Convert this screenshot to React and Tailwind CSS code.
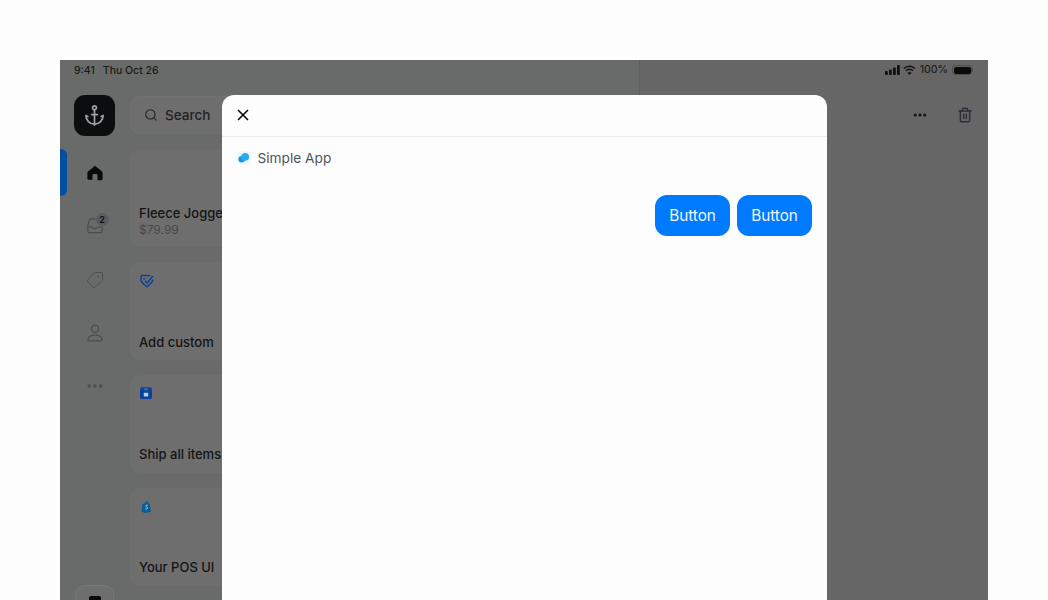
import React from "react";
import { Anchor, Search, X, Tag, Ellipsis, Trash2 } from "lucide-react";

function Card({ icon, title, sub, titleClass }) {
  return (
    <div className="h-[98px] w-[220px] shrink-0 rounded-[12px] bg-[#6e6e6e] pl-[10px] pr-0 flex flex-col overflow-hidden whitespace-nowrap">
      <div className="h-[34px] pt-[11px] flex">{icon}</div>
      <div className="flex-1" />
      <div className={`text-[13px] leading-[16px] font-medium text-[#141414] ${titleClass}`}>{title}</div>
      {sub && <div className="text-[12px] leading-[14px] text-[#45474a] pb-[10px]">{sub}</div>}
    </div>
  );
}

const Discount = () => (
  <svg width="16" height="16" viewBox="0 0 16 16" fill="none" stroke="#07439a" strokeWidth="1.5" strokeLinecap="round" strokeLinejoin="round">
    <path d="M10.5 2.6H3.2c-.7 0-1.2.5-1.2 1.2v3.4c0 1 .5 1.7 1.2 2.4l4 3.7c.5.5 1 .5 1.5 0l3.7-3.6c.7-.7 1.3-1.5 1.3-2.6" />
    <path d="M6.5 8.4 8.3 10 13.4 3.5" />
    <circle cx="5" cy="5.8" r=".6" fill="#07439a" strokeWidth="0.6" />
  </svg>
);

const Store = () => (
  <svg width="14" height="14" viewBox="0 0 14 14" fill="none">
    <path d="M3 1.200h8c.9 0 1.600.6 1.700 1.500l.3 2.300v6.500c0 .8-.7 1.500-1.500 1.500h-9C1.700 13 1 12.300 1 11.500V5l.3-2.300c.1-.9.800-1.500 1.700-1.500z" fill="#07439a" />
    <path d="M5.300 2.200h3.400l.3 2.200H5z" fill="#3a68ac" />
    <rect x="4.800" y="6.800" width="4.400" height="3.600" rx="0.500" fill="#c4ccd8" />
  </svg>
);

const Bag = () => (
  <svg width="11" height="13" viewBox="0 0 12 14" className="ml-[2px] mt-[1px]">
    <path d="M1.600 4.200 4 3.400C4.300 1.800 5.200.8 6.200.8c1 0 1.800 1 2 2.600l1.300.5 1.300 8.800L4.700 14 .6 12.800z" fill="#075d97" />
    <path d="M4.800 3.200c.2-1 .7-1.700 1.300-1.700s1 .7 1.200 1.700" stroke="#6e6e6e" strokeWidth="0.6" fill="none" />
    <path d="M7.500 5.800c-.8-.5-2.300-.3-2.300.7 0 1.100 2 1 2 2.200 0 1.100-1.500 1.300-2.500.7" stroke="#b9cfe0" strokeWidth="1" fill="none" />
  </svg>
);

export default function App() {
  return (
    <div className="h-[600px] w-[1048px] overflow-hidden bg-[#fdfdfd] pt-[60px] px-[60px] font-['Inter',sans-serif]">
      <div className="relative h-[540px] w-[928px] overflow-hidden bg-[#666666] flex">
        {/* Left pane */}
        <div className="w-[580px] shrink-0 h-full bg-[#696b6a] border-r border-[#5e5e5e] flex flex-col">
          <div className="h-[35px] shrink-0 pl-[14px] pt-[4px] text-[10.5px] leading-[13px] font-medium text-[#1a1a1a] flex gap-[8px]">
            <span>9:41</span>
            <span>Thu Oct 26</span>
          </div>
          <div className="flex flex-1 min-h-0">
            {/* Rail */}
            <div className="w-[69px] shrink-0 flex flex-col items-center relative">
              <div className="w-[41px] h-[41px] rounded-[11px] bg-[#0c0d0e] flex items-center justify-center">
                <Anchor size={23} strokeWidth={1.8} color="#a0a0a0" />
              </div>
              <div className="absolute left-0 top-[54px] w-[7px] h-[47px] rounded-r-[6px] bg-[#004fa3]" />
              <div className="mt-[27px] h-[20px] flex items-center">
                <svg width="16" height="16" viewBox="0 0 16 16" fill="#0a0a0a">
                  <path d="M8 .8 15 6.400c.4.300.6.700.6 1.200v6.200c0 .8-.6 1.400-1.400 1.400H10.500V10.500c0-.8-.6-1.400-1.400-1.400H6.900c-.8 0-1.400.6-1.400 1.400v4.300H1.800c-.8 0-1.400-.6-1.400-1.400V7.600c0-.5.200-.9.600-1.200z" />
                </svg>
              </div>
              <div className="mt-[33px] h-[20px] flex items-center relative">
                <svg width="16" height="16" viewBox="0 0 16 16" fill="none" stroke="#4a4d52" strokeWidth="1.300" strokeLinejoin="round">
                  <path d="M8.500 1H4C3 1 2.400 1.600 2.200 2.400L.8 8v4.500c0 1.200.9 2.200 2.200 2.200h10c1.300 0 2.200-1 2.200-2.200V9" />
                  <path d="M.8 8.800h3.700c.7 0 1 .5 1.200 1 .3.700.8 1 1.500 1h1.600c.7 0 1.200-.3 1.500-1 .2-.5.500-1 1.200-1h3.900" />
                </svg>
                <span className="absolute left-[9px] top-[-3px] w-[13px] h-[13px] rounded-full bg-[#5a5c5e] text-[9px] leading-[13px] font-semibold text-center text-[#111]">2</span>
              </div>
              <div className="mt-[34px] h-[20px] flex items-center">
                <Tag size={18} strokeWidth={1.300} color="#4a4d52" className="-scale-x-100" />
              </div>
              <div className="mt-[33px] h-[20px] flex items-center">
                <svg width="16" height="18" viewBox="0 0 16 18" fill="none" stroke="#4a4d52" strokeWidth="1.300">
                  <circle cx="8" cy="4.800" r="3.600" />
                  <path d="M1 15.500c0-2.600 3-4.300 7-4.300s7 1.700 7 4.300c0 .9-.6 1.300-1.400 1.300H2.400C1.600 16.800 1 16.400 1 15.500z" />
                </svg>
              </div>
              <div className="mt-[33px] h-[20px] flex items-center">
                <Ellipsis size={20} strokeWidth={2} color="#4a4d52" />
              </div>
              <div className="absolute left-[15px] top-[490px] w-[39px] h-[39px] rounded-[10px] bg-[#6e6e6e] border border-[#777777] flex justify-center pt-[10px]">
                <div className="w-[12px] h-[12px] rounded-[2px] bg-[#0a0a0a]" />
              </div>
            </div>
            {/* List */}
            <div className="flex-1 flex flex-col min-w-0 pl-[1px]">
              <div className="h-[38px] w-[220px] mt-[1px] shrink-0 rounded-[10px] bg-[#6e6e6e] border border-[#727272] flex items-center pl-[13px] gap-[7px]">
                <Search size={14} strokeWidth={1.800} color="#1f1f1f" />
                <span className="text-[13.5px] leading-[16px] font-medium text-[#222222]">Search</span>
              </div>
              <div className="mt-[15px] flex flex-col gap-[15px] -ml-[1px]">
                <Card title="Fleece Joggers" sub="$79.99" icon={null} titleClass="pb-[2px]" />
                <Card title="Add custom" icon={<Discount />} titleClass="pb-[10px]" />
                <Card title="Ship all items" icon={<Store />} titleClass="pb-[11px]" />
                <Card title="Your POS UI" icon={<Bag />} titleClass="pb-[11px]" />
              </div>
            </div>
          </div>
        </div>
        {/* Right pane */}
        <div className="flex-1 min-w-0 flex flex-col">
          <div className="h-[35px] shrink-0 pr-[15px] flex items-start pt-[3px] justify-end gap-[3px]">
            <svg width="15" height="10" viewBox="0 0 15 10" fill="#111" className="mt-[2px]">
              <rect x="0" y="6" width="2.800" height="4" rx="0.700" />
              <rect x="4" y="4.500" width="2.800" height="5.500" rx="0.700" />
              <rect x="8" y="2.500" width="2.800" height="7.500" rx="0.700" />
              <rect x="12" y="0" width="2.800" height="10" rx="0.700" />
            </svg>
            <svg width="13" height="10" viewBox="0 0 13 10" fill="none" stroke="#111" strokeWidth="1.500" className="mt-[2px]">
              <path d="M.8 3.500C4 .4 9 .4 12.200 3.500" />
              <path d="M2.800 5.700c2-1.900 5.400-1.900 7.400 0" />
              <path d="M6.500 9.600 4.800 7.800c1-.9 2.400-.9 3.400 0z" fill="#111" strokeWidth="0.500" />
            </svg>
            <span className="text-[10.5px] leading-[14px] font-medium text-[#1f1f1f] ml-[1px]">100%</span>
            <span className="mt-[2px] ml-[1px] w-[20px] h-[10px] rounded-[3px] border border-[#4d4d4d] p-[0.5px] flex">
              <span className="flex-1 rounded-[2px] bg-[#0a0a0a]" />
            </span>
            <span className="mt-[5px] -ml-[3px] w-[1px] h-[4px] rounded-r-[1px] bg-[#4d4d4d]" />
          </div>
          <div className="flex justify-end items-center gap-[29px] pr-[15px] h-[40px]">
            <Ellipsis size={16} strokeWidth={2.600} color="#111111" />
            <Trash2 size={16} strokeWidth={2.200} color="#2c2f36" />
          </div>
        </div>
        {/* Modal */}
        <div className="absolute left-[161.5px] top-[34.5px] w-[605px] h-[520px] rounded-t-[12px] bg-[#fdfdfd] flex flex-col">
          <div className="h-[42px] shrink-0 border-b border-[#ececec] flex items-center pl-[12px]">
            <X size={18} strokeWidth={2.200} color="#0a0a0a" />
          </div>
          <div className="h-[43px] flex items-center pl-[15px] gap-[7px]">
            <svg width="14" height="14" viewBox="0 0 14 14" className="rounded-[3px] bg-[#f4f6f8]">
              <circle cx="4.700" cy="8.200" r="3.300" fill="#1c95e8" />
              <circle cx="8.200" cy="5.800" r="3.900" fill="#29a9ee" />
            </svg>
            <span className="text-[13.7px] leading-[16px] text-[#50535b]">Simple App</span>
          </div>
          <div className="flex justify-end gap-[7px] pr-[14.5px] pt-[15.5px]">
            <button className="w-[75px] h-[41px] rounded-[12px] bg-[#007aff] text-[#f2f7ff] text-[15.3px] leading-[18px]">Button</button>
            <button className="w-[75px] h-[41px] rounded-[12px] bg-[#007aff] text-[#f2f7ff] text-[15.3px] leading-[18px]">Button</button>
          </div>
        </div>
      </div>
    </div>
  );
}
